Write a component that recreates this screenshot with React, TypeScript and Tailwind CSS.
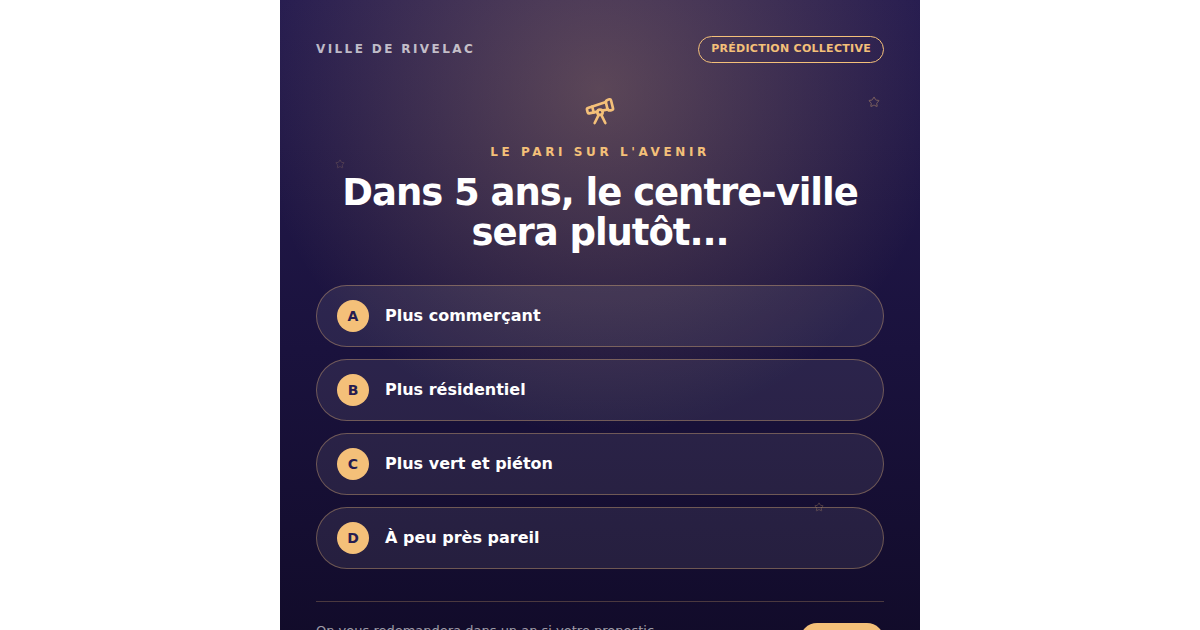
import { Star, Telescope } from "lucide-react";

const choices = [
  { key: "A", label: "Plus commerçant" },
  { key: "B", label: "Plus résidentiel" },
  { key: "C", label: "Plus vert et piéton" },
  { key: "D", label: "À peu près pareil" },
];

export default function App() {
  return (
    <div className="flex h-[630px] justify-center overflow-hidden bg-white font-['DejaVu_Sans',sans-serif]">
      <main className="relative h-[700px] w-[640px] shrink-0 bg-[radial-gradient(circle_345px_at_50%_90px,rgba(244,192,121,0.27),rgba(244,192,121,0)),linear-gradient(180deg,#261c50_0%,#1a123d_50%,#100a26_100%)] px-9 pt-9 text-white">
        <header className="flex items-center justify-between">
          <span className="pb-[2px] text-[12px] font-bold leading-[14px] tracking-[2.4px] text-white/70">VILLE DE RIVELAC</span>
          <span className="rounded-full border border-[#f4c079] px-3 pb-[7px] pt-[5px] text-[11px] font-bold leading-[13px] tracking-[0.28px] text-[#f4c079]">
            PRÉDICTION COLLECTIVE
          </span>
        </header>

        <section className="mt-8 flex flex-col items-center text-center">
          <Telescope className="text-[#f4c079]" size={32} strokeWidth={2} />
          <p className="mt-[18px] text-[12px] font-bold leading-[14px] tracking-[3.6px] text-[#f4c079]">LE PARI SUR L'AVENIR</p>
          <h1 className="mt-[14px] text-[37px] font-bold leading-[40px] tracking-[-1.04px]">
            Dans 5 ans, le centre-ville
            <br />
            sera plutôt...
          </h1>
        </section>

        <div className="mt-8 flex flex-col gap-3">
          {choices.map((choice) => (
            <button
              key={choice.key}
              className="flex h-[62px] items-center gap-4 rounded-full border border-[#f4c079]/35 bg-white/8 px-5 text-left"
              type="button"
            >
              <span className="flex size-8 items-center justify-center rounded-full bg-[#f4c079] text-[14px] font-bold text-[#261c50]">
                {choice.key}
              </span>
              <span className="pb-[2px] text-[16px] font-bold leading-[19px]">{choice.label}</span>
            </button>
          ))}
        </div>

        <footer className="mt-8 flex items-start justify-between border-t border-[#f4c079]/25 pt-[21px]">
          <p className="-mt-px text-[13px] leading-[18px] text-white/60">On vous redemandera dans un an si votre pronostic</p>
          <span className="h-[34px] w-[84px] rounded-full bg-[#f4c079]" />
        </footer>

        <Star className="absolute left-[588px] top-24 text-[#f4c079] opacity-40" size={12} />
        <Star className="absolute left-[55px] top-[159px] text-[#f4c079] opacity-20" size={10} />
        <Star className="absolute left-[534px] top-[502px] text-[#f4c079] opacity-30" size={10} />
      </main>
    </div>
  );
}
